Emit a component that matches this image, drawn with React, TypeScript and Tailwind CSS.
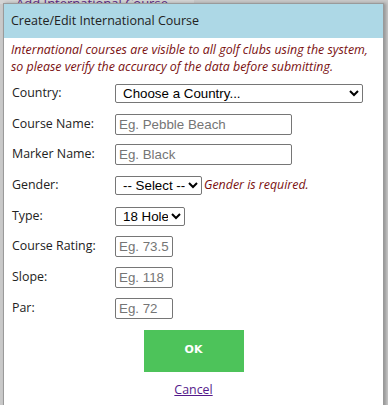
import React from "react";

const labelCls = "w-[103px] shrink-0 text-[12.4px] text-[#222]";
const inputCls =
  "h-[21px] border border-[#767676] rounded-[2px] px-[3px] text-[13.33px] text-black placeholder:text-[#757575] bg-white font-['Liberation_Sans',Arial,sans-serif] outline-none";
const selectCls =
  "h-[19px] border border-[#767676] rounded-[2px] pl-[3px] text-[13.33px] text-black bg-white font-['Liberation_Sans',Arial,sans-serif]";

const Row = ({ label, children }: { label: string; children: React.ReactNode }) => (
  <div className="flex items-center h-[30.7px]">
    <span className={labelCls}>{label}</span>
    {children}
  </div>
);

const App = () => {
  return (
    <div className="relative w-[388px] h-[405px] overflow-hidden bg-[#c9c9c9] font-['Open_Sans',sans-serif]">
      {/* page behind the dialog */}
      <div className="absolute left-0 top-[-10px] w-[194px] h-[14px] bg-[#d4d4d4]">
        <span className="ml-[16px] text-[13px] text-[#5b2a86] underline">Add International Course</span>
      </div>

      <div className="absolute left-[3px] top-[3px] w-[381px] h-[420px] bg-white border border-[#9a9a9a] shadow-[2px_0_3px_rgba(0,0,0,0.25)]">
        <div className="h-[34px] bg-[#add8e6] flex items-center px-[7px] text-[12.5px] text-[#222]">
          Create/Edit International Course
        </div>
        <div className="px-[7px] pt-[3px] text-[12.4px] leading-[17px] italic text-[#7a1010]">
          International courses are visible to all golf clubs using the system, so please verify the accuracy of the data before submitting.
        </div>

        <div className="pl-[8px] pt-[3px]">
          <Row label="Country:">
            <select className={`${selectCls} w-[248px]`} defaultValue="">
              <option value="">Choose a Country...</option>
            </select>
          </Row>
          <Row label="Course Name:">
            <input className={`${inputCls} w-[177px]`} placeholder="Eg. Pebble Beach" />
          </Row>
          <Row label="Marker Name:">
            <input className={`${inputCls} w-[177px]`} placeholder="Eg. Black" />
          </Row>
          <Row label="Gender:">
            <select className={`${selectCls} w-[87px]`} defaultValue="">
              <option value="">-- Select --</option>
            </select>
            <span className="ml-[2px] text-[12.4px] italic text-[#7a1010]">Gender is required.</span>
          </Row>
          <Row label="Type:">
            <select className={`${selectCls} w-[70px]`} defaultValue="18">
              <option value="18">18 Hole</option>
            </select>
          </Row>
          <Row label="Course Rating:">
            <input className={`${inputCls} w-[58px]`} placeholder="Eg. 73.5" />
          </Row>
          <Row label="Slope:">
            <input className={`${inputCls} w-[58px]`} placeholder="Eg. 118" />
          </Row>
          <Row label="Par:">
            <input className={`${inputCls} w-[58px]`} placeholder="Eg. 72" />
          </Row>
        </div>

        <div className="flex flex-col items-center pt-[6px]">
          <button className="w-[100px] h-[42px] bg-[#4dc35a] text-white text-[11px] font-bold font-['DejaVu_Sans',Verdana,sans-serif]">
            OK
          </button>
          <a href="#" className="mt-[9px] text-[12.4px] text-[#551a8b] underline">
            Cancel
          </a>
        </div>
      </div>
    </div>
  );
};

export default App;
